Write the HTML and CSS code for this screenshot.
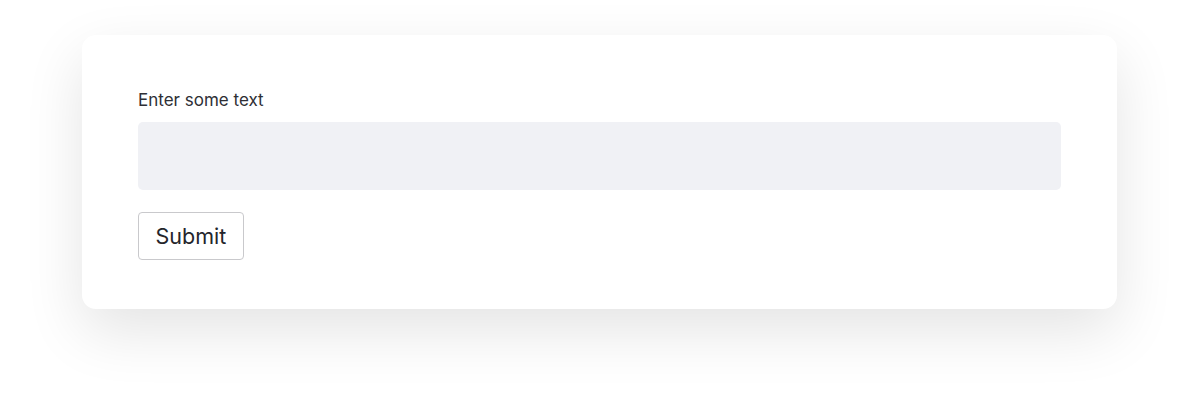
FILE: index.html
```html
<!DOCTYPE html>
<html lang="en">
<head>
<meta charset="utf-8">
<title>Form</title>
<link rel="stylesheet" href="styles.css">
</head>
<body>
<div class="page">
  <form class="card">
    <label class="label" for="txt">Enter some text</label>
    <input class="field" id="txt" type="text">
    <button class="submit" type="button">Submit</button>
  </form>
</div>
</body>
</html>
```
FILE: styles.css
```css
html, body {
  margin: 0;
  background: #ffffff;
}
.page {
  box-sizing: border-box;
  min-height: 401px;
  padding: 35px 83px 92px 82px;
  font-family: Inter, "Noto Sans", sans-serif;
}
.card {
  display: flex;
  flex-direction: column;
  align-items: flex-start;
  background: #ffffff;
  border-radius: 14px;
  padding: 55px 56px 49px;
  box-shadow: 0 22px 60px rgba(0, 0, 0, 0.11);
  margin: 0;
}
.label {
  font-size: 17px;
  line-height: 20px;
  color: #2e2f35;
}
.field {
  box-sizing: border-box;
  align-self: stretch;
  margin: 12px 0 0 0;
  height: 68px;
  border: none;
  border-radius: 5px;
  background: #f0f1f5;
  outline: none;
  font: inherit;
  font-size: 16px;
  padding: 0 12px;
}
.submit {
  box-sizing: border-box;
  margin-top: 22px;
  height: 48px;
  padding: 0 16.5px;
  border: 1px solid #c9c9cc;
  border-radius: 4px;
  background: #ffffff;
  font-family: Inter, "Noto Sans", sans-serif;
  font-size: 21.5px;
  line-height: 44px;
  color: #24252b;
}
```
